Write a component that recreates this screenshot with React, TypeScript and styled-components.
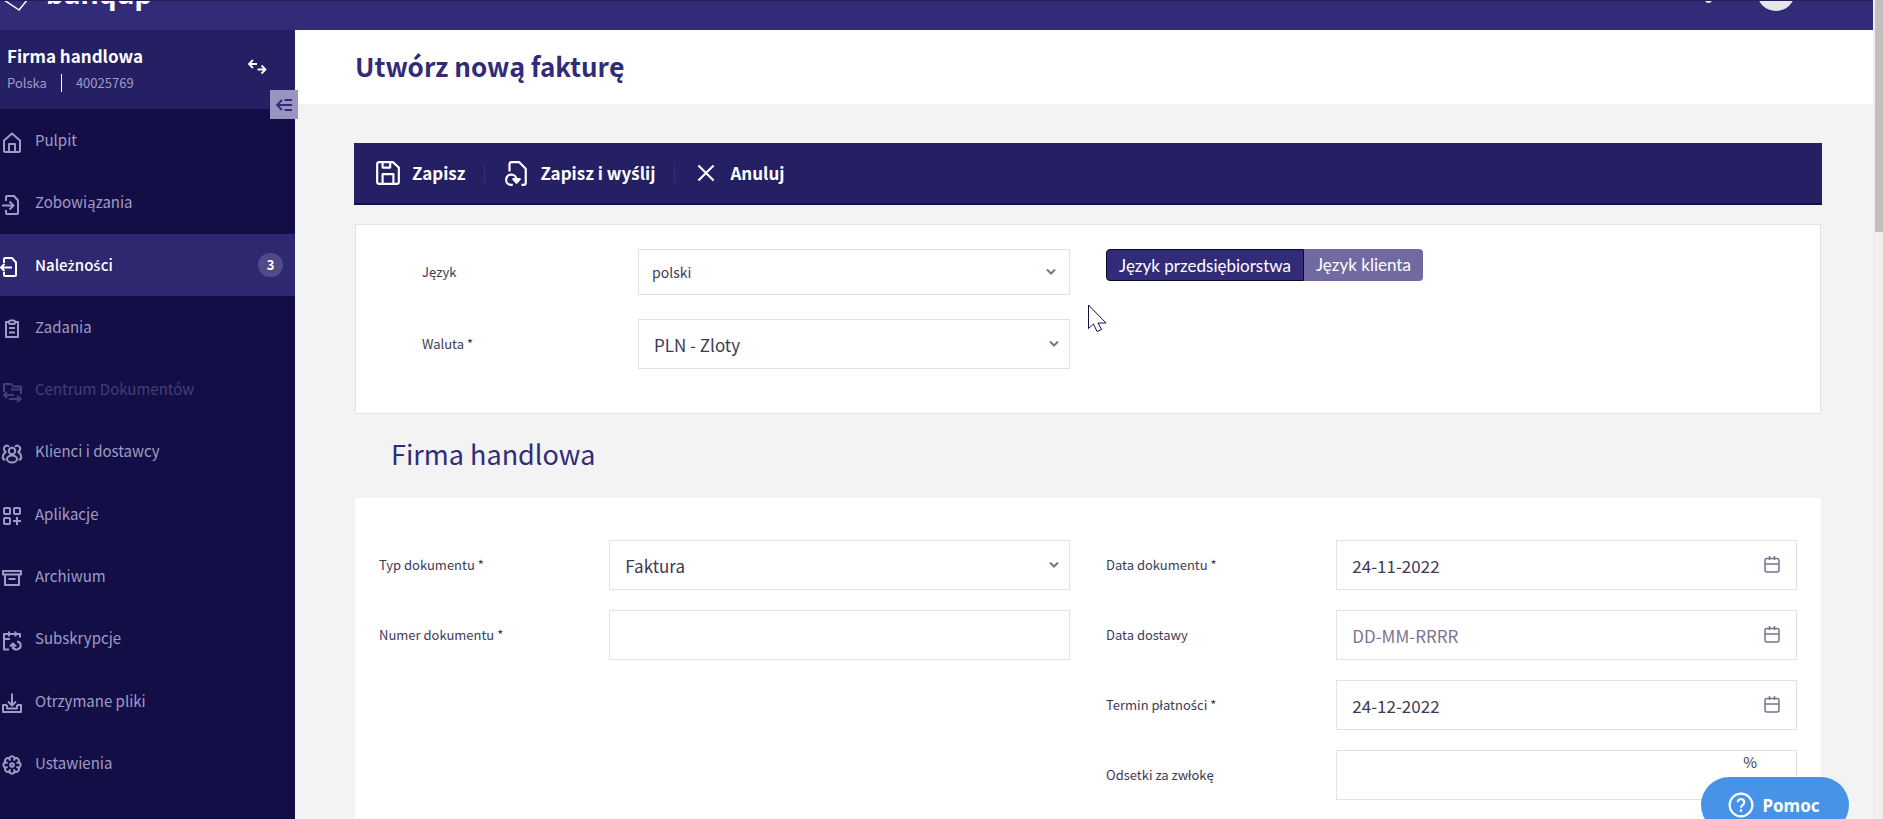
import React from 'react';
import styled, { createGlobalStyle } from 'styled-components';

const sans = `'Noto Sans CJK JP', 'Noto Sans', sans-serif`;

const GlobalStyle = createGlobalStyle`
  * { box-sizing: border-box; }
  html, body { margin: 0; }
  body { font-family: ${sans}; font-size: 14px; color: #3e3a55; background: #f3f3f3; }
  button, input, select { font-family: inherit; }
`;

const Window = styled.div`
  display: flex;
  height: 100vh;
  overflow: hidden;
`;

const Page = styled.div`
  flex: 1;
  min-width: 0;
  display: flex;
  flex-direction: column;
`;

const ScrollTrack = styled.div`
  width: 10px;
  padding-left: 2px;
  background: #efefef;
`;

const ScrollThumb = styled.div`
  height: 232px;
  background: #c0c0c0;
`;

const Header = styled.header`
  flex: none;
  height: 30px;
  display: flex;
  justify-content: space-between;
  align-items: flex-end;
  overflow: hidden;
  background: #322b78;
  border-top: 1px solid #272058;
`;

const Brand = styled.a`
  display: flex;
  align-items: flex-end;
  gap: 16px;
  padding-bottom: 19px;
  color: #fff;
  font-family: 'Noto Sans', sans-serif;
  font-size: 28px;
  font-weight: 700;
  line-height: 36px;
  text-decoration: none;
`;

const HeaderTools = styled.div`
  display: flex;
  align-items: flex-end;
  gap: 45px;
  padding: 0 78px 19px 0;
`;

const Avatar = styled.span`
  width: 38px;
  height: 38px;
  border-radius: 50%;
  background: #e6e4ec;
`;

const Dot = styled.span`
  width: 7px;
  height: 7px;
  margin-bottom: 8px;
  border-radius: 50%;
  background: #e6e4ec;
`;

const Body = styled.div`
  flex: 1;
  min-height: 0;
  display: flex;
`;

const Sidebar = styled.aside`
  flex: none;
  position: relative;
  width: 295px;
  display: flex;
  flex-direction: column;
  background: #130f46;
`;

const Company = styled.div`
  flex: none;
  height: 79px;
  display: flex;
  justify-content: space-between;
  align-items: center;
  padding: 0 28px 2px 7px;
  background: #251f64;
`;

const CompanyName = styled.div`
  color: #fff;
  font-size: 17px;
  font-weight: 700;
  line-height: 28px;
`;

const CompanyMeta = styled.div`
  display: flex;
  align-items: center;
  gap: 14px;
  color: #a09bc4;
  font-size: 13px;
  line-height: 26px;
`;

const MetaRule = styled.span`
  width: 1px;
  height: 18px;
  background: #fff;
`;

const IconButton = styled.button`
  display: flex;
  align-items: center;
  justify-content: center;
  padding: 0;
  border: 0;
  background: none;
  color: #fff;
`;

const CollapseButton = styled(IconButton)`
  position: absolute;
  z-index: 1;
  top: 60px;
  right: -3px;
  width: 28px;
  height: 29px;
  background: #9a94c0;
  color: #322b78;
`;

const Nav = styled.nav`
  flex: 1;
  display: flex;
  flex-direction: column;
  padding-bottom: 25px;
`;

const NavItem = styled.a<{ $active?: boolean; $muted?: boolean }>`
  flex: 1;
  display: flex;
  align-items: center;
  gap: 11px;
  padding-right: 12px;
  color: ${(p) => (p.$active ? '#fff' : p.$muted ? '#443d78' : '#a09bc4')};
  background: ${(p) => (p.$active ? '#2e2870' : 'transparent')};
  font-size: 15px;
  font-weight: ${(p) => (p.$active ? 500 : 400)};
  line-height: 24px;
  text-decoration: none;
  svg { flex: none; margin-top: 5px; }
`;

const NavText = styled.span`
  flex: 1;
`;

const Badge = styled.span`
  width: 25px;
  height: 24px;
  border-radius: 12px;
  background: #514a88;
  font-size: 13px;
  font-weight: 700;
  text-align: center;
`;

const Main = styled.main`
  flex: 1;
  min-width: 0;
  overflow: hidden;
`;

const TitleBar = styled.div`
  height: 74px;
  display: flex;
  align-items: center;
  padding: 0 60px 2px;
  background: #fff;
`;

const Title = styled.h1`
  margin: 0;
  color: #322b78;
  font-size: 26px;
  font-weight: 700;
  line-height: 40px;
`;

const Content = styled.div`
  padding: 39px 51px 0 59px;
`;

const Toolbar = styled.div`
  height: 62px;
  display: flex;
  align-items: center;
  padding: 0 21px;
  background: #251f64;
  border-bottom: 2px solid #130f46;
`;

const ToolButton = styled.button`
  display: flex;
  align-items: center;
  gap: 11px;
  padding: 0 19px 0 0;
  border: 0;
  background: none;
  color: #fff;
  font-size: 17px;
  font-weight: 700;
  line-height: 28px;
  & + & {
    padding-left: 19px;
    background: linear-gradient(#352e7c, #352e7c) left center / 1px 19px no-repeat;
  }
`;

const Card = styled.section<{ $outlined?: boolean }>`
  margin: 0 1px;
  padding: ${(p) => (p.$outlined ? '24px 23px 44px' : '42px 24px 40px')};
  display: grid;
  grid-template-columns: 1fr 1fr;
  column-gap: 36px;
  background: #fff;
  border: ${(p) => (p.$outlined ? '1px solid #e4e4e4' : '0')};
`;

const Settings = styled.div`
  margin-top: 19px;
`;

const Column = styled.div<{ $inset?: boolean; $gap: number }>`
  display: flex;
  flex-direction: column;
  gap: ${(p) => p.$gap}px;
  padding-left: ${(p) => (p.$inset ? 43 : 0)}px;
`;

const Field = styled.div`
  display: grid;
  grid-template-columns: 1fr 2fr;
  align-items: center;
`;

const Label = styled.label`
  font-size: 13px;
  line-height: 20px;
`;

const ControlWrap = styled.div`
  position: relative;
`;

const Trailing = styled.span<{ $right: number }>`
  position: absolute;
  right: ${(p) => p.$right}px;
  top: 0;
  bottom: 0;
  display: flex;
  align-items: center;
  color: #7d6f8c;
  pointer-events: none;
`;

const Percent = styled.span`
  position: absolute;
  top: 0;
  right: 40px;
  font-size: 15px;
  line-height: 24px;
`;

const Select = styled.select<{ $compact?: boolean }>`
  display: block;
  width: 100%;
  height: ${(p) => (p.$compact ? 46 : 50)}px;
  padding: ${(p) => (p.$compact ? '0 13px' : '0 15px')};
  appearance: none;
  border: 1px solid #e2e2e2;
  border-radius: 0;
  background: #fff;
  color: #3e3a55;
  font-size: ${(p) => (p.$compact ? 14 : 17)}px;
`;

const Input = styled.input`
  display: block;
  width: 100%;
  height: 50px;
  padding: 0 15px;
  border: 1px solid #e2e2e2;
  border-radius: 0;
  background: #fff;
  color: #3e3a55;
  font-size: 17px;
  &::placeholder { color: #7d7590; opacity: 1; }
`;

const Segmented = styled.div`
  display: flex;
  height: 32px;
`;

const Segment = styled.button<{ $on?: boolean }>`
  padding: ${(p) => (p.$on ? '2px 12px 0' : '0 12px')};
  border: ${(p) => (p.$on ? '1px solid #0b0830' : '0')};
  border-radius: ${(p) => (p.$on ? '4px 0 0 4px' : '0 4px 4px 0')};
  background: ${(p) => (p.$on ? '#322b78' : '#706aa0')};
  color: #fff;
  font-family: Lato, sans-serif;
  font-size: 17px;
  line-height: 24px;
`;

const SectionTitle = styled.h2`
  margin: 0;
  padding: 20px 37px 24px;
  color: #322b78;
  font-size: 27px;
  font-weight: 400;
  line-height: 40px;
`;

const HelpButton = styled.button`
  position: fixed;
  z-index: 2;
  right: 34px;
  bottom: -14px;
  width: 148px;
  height: 56px;
  display: flex;
  align-items: center;
  justify-content: center;
  gap: 8px;
  padding: 0 8px 0 6px;
  border: 0;
  border-radius: 28px;
  background: #4793e8;
  color: #fff;
  font-family: 'Noto Sans', sans-serif;
  font-size: 17px;
  font-weight: 700;
`;

const Pointer = styled.svg`
  position: absolute;
  z-index: 3;
  left: 1088px;
  top: 304px;
`;

const Accented = styled.span`
  font-family: 'Noto Sans', sans-serif;
`;

/* The main family has no ś, ż or ć, so those letters come from the second one. */
const polish = (text: string) =>
  text.split(/([śżć])/).map((part, i) => (i % 2 ? <Accented key={i}>{part}</Accented> : part));

type GlyphProps = { size?: number; width?: number; children: React.ReactNode };
const Glyph = ({ size = 24, width = 2, children }: GlyphProps) => (
  <svg width={size} height={size} viewBox="0 0 24 24" fill="none" stroke="currentColor"
    strokeWidth={width} strokeLinejoin="round" aria-hidden="true">{children}</svg>
);

/* Eight rounded petals and eight spokes of the settings wheel. */
const polar = (r: number, deg: number) => {
  const a = (deg * Math.PI) / 180;
  return `${(12 + r * Math.cos(a)).toFixed(2)} ${(12 + r * Math.sin(a)).toFixed(2)}`;
};
const turns = Array.from({ length: 8 }, (_, i) => i * 45);
const petals = `M${polar(7.3, -22.5)}` + turns.map((t) => `A3 3 0 0 1 ${polar(7.3, t + 22.5)}`).join('');
const spokes = turns.map((t) => `M${polar(4.8, t + 22.5)}L${polar(7.3, t + 22.5)}`).join('');

const nav: { text: string; icon: React.ReactNode; active?: boolean; muted?: boolean; count?: number }[] = [
  { text: 'Pulpit', icon: <path d="M4 9.500 12 2.500l8 7V20a1 1 0 0 1-1 1H5a1 1 0 0 1-1-1zM9 21v-8h6v8" /> },
  { text: 'Zobowiązania', icon: <path d="M6 8V4a1 1 0 0 1 1-1h7l4 4.500V20a1 1 0 0 1-1 1H7a1 1 0 0 1-1-1v-3M2 12.500h11M9.500 8.500l4 4-4 4" /> },
  { text: 'Należności', active: true, count: 3, icon: <path d="M4 8V4a1 1 0 0 1 1-1h7l4 4.500V20a1 1 0 0 1-1 1H5a1 1 0 0 1-1-1v-3M12 12.500H1M4.500 9l-3.500 3.500 3.500 3.500" /> },
  { text: 'Zadania', icon: <><path d="M8.500 5H6v15h12V5h-2.500" /><rect x="9" y="3.500" width="6" height="3.500" rx="1.500" /><path d="M9 11h6M9 15.500h6" /></> },
  { text: 'Centrum Dokumentów', muted: true, icon: <path d="M4 12V4h7l2 2.500h8V14M11 9.500h10M7 12l-3 3 3 3M4 15h10M17 16l4 3-4 3M9 19h12" /> },
  { text: 'Klienci i dostawcy', icon: <><circle cx="12" cy="9" r="3.200" /><ellipse cx="12" cy="17" rx="5" ry="3.500" /><path d="M9 4.800a2.900 2.900 0 0 0-4.500 3.700c.3.700.8 1.200 1.300 1.500C3 11.500 2 15 3.500 17.500h2M15 4.800a2.900 2.900 0 0 1 4.500 3.700c-.3.700-.8 1.200-1.300 1.500C21 11.500 22 15 20.500 17.500h-2" /></> },
  { text: 'Aplikacje', icon: <><rect x="4" y="4" width="6" height="6" rx="1" /><rect x="14" y="4" width="6" height="6" rx="1" /><rect x="4" y="14" width="6" height="6" rx="1" /><path d="M17 13v8M13 17h8" /></> },
  { text: 'Archiwum', icon: <path d="M3 5h18v3.500H3zM5 8.500V19h14V8.500M8.500 13h7" /> },
  { text: 'Subskrypcje', icon: <path d="M9 2.500v5M15.500 2.500v5M20 8.500V5H4v15.500h5M4 10h6M17 12.500a4 4 0 1 1-4 5.500M13 20v-4.500M10 17.500l3-3 3 3" /> },
  { text: 'Otrzymane pliki', icon: <path d="M12 2.500V14M8 10.500l4 4 4-4M7 14H3v7h18v-7h-4M7 14v3.500h10V14" /> },
  { text: 'Ustawienia', icon: <><path d={petals} /><path d={spokes} /><circle cx="12" cy="12" r="1.800" /></> },
];

const Chevron = () => (
  <svg width="10" height="6" viewBox="0 0 10 6" fill="none" stroke="currentColor" strokeWidth="2" aria-hidden="true"><path d="m1 .5 4 4 4-4" /></svg>
);

const CalendarIcon = () => (
  <svg width="16" height="18" viewBox="0 0 16 18" fill="none" stroke="currentColor" strokeWidth="1.500" aria-hidden="true">
    <rect x="1" y="2.500" width="14" height="13.500" rx="2" /><path d="M1 8h14M5.500 0v4M10.500 0v4" />
  </svg>
);

type ItemProps = { id: string; label: string; value?: string; compact?: boolean; placeholder?: string };

const SelectField = ({ id, label, value, compact }: ItemProps) => (
  <Field>
    <Label htmlFor={id}>{label}</Label>
    <ControlWrap>
      <Select id={id} $compact={compact}><option>{value}</option></Select>
      <Trailing $right={compact ? 14 : 11}><Chevron /></Trailing>
    </ControlWrap>
  </Field>
);

const DateField = ({ id, label, value, placeholder }: ItemProps) => (
  <Field>
    <Label htmlFor={id}>{polish(label)}</Label>
    <ControlWrap>
      <Input id={id} type="text" defaultValue={value} placeholder={placeholder} />
      <Trailing $right={17}><CalendarIcon /></Trailing>
    </ControlWrap>
  </Field>
);

export default function App() {
  return (
    <Window>
      <GlobalStyle />
      <Page>
        <Header>
          <Brand href="#">
            <svg width="30" height="38" viewBox="0 0 30 38" fill="none" stroke="currentColor" strokeWidth="1.500" aria-hidden="true"><path d="M19 37 4 27 1 12 12 2l16 6v18z" /></svg>
            banqup
          </Brand>
          <HeaderTools><Dot /><Avatar /></HeaderTools>
        </Header>
        <Body>
          <Sidebar>
            <Company>
              <div>
                <CompanyName>Firma handlowa</CompanyName>
                <CompanyMeta>Polska<MetaRule />40025769</CompanyMeta>
              </div>
              <IconButton type="button" aria-label="Zmień firmę">
                <svg width="20" height="20" viewBox="0 0 20 20" fill="none" stroke="currentColor" strokeWidth="1.800"><path d="M10 5H2.500M6 1 2 5l4 4M10.500 10.500H18M14.500 6.500l4 4-4 4" /></svg>
              </IconButton>
            </Company>
            <CollapseButton type="button" aria-label="Zwiń menu">
              <svg width="18" height="14" viewBox="0 0 18 14" fill="none" stroke="currentColor" strokeWidth="1.800"><path d="M17 7H2M7 2 2 7l5 5M9.500 2H17M9.500 12H17" /></svg>
            </CollapseButton>
            <Nav>
              {nav.map((n) => (
                <NavItem key={n.text} href="#" $active={n.active} $muted={n.muted}>
                  <Glyph>{n.icon}</Glyph>
                  <NavText>{polish(n.text)}</NavText>
                  {n.count && <Badge>{n.count}</Badge>}
                </NavItem>
              ))}
            </Nav>
          </Sidebar>
          <Main>
            <TitleBar><Title>Utwórz nową fakturę</Title></TitleBar>
            <Content>
              <Toolbar>
                <ToolButton type="button">
                  <Glyph size={26}><path d="M4 2h12.500L22 7v13a2 2 0 0 1-2 2H4a2 2 0 0 1-2-2V4a2 2 0 0 1 2-2zM7 2v5h7V2M7 22v-9h10v9" /></Glyph>
                  Zapisz
                </ToolButton>
                <ToolButton type="button">
                  <Glyph size={26}><path d="M6 10.500V4a2 2 0 0 1 2-2h7l6 6v13a2 2 0 0 1-2 2h-2M9 23H7a4.800 4.800 0 1 1 5.500-5" /><path d="M9.500 17.500h6l-3 3.500z" fill="currentColor" /></Glyph>
                  <span>{polish('Zapisz i wyślij')}</span>
                </ToolButton>
                <ToolButton type="button">
                  <Glyph size={26}><path d="m5 5 14 14M19 5 5 19" /></Glyph>
                  Anuluj
                </ToolButton>
              </Toolbar>
              <Settings>
                <Card $outlined>
                  <Column $inset $gap={24}>
                    <SelectField id="language" label="Język" value="polski" compact />
                    <SelectField id="currency" label="Waluta *" value="PLN - Zloty" />
                  </Column>
                  <Segmented>
                    <Segment type="button" $on>Język przedsiębiorstwa</Segment>
                    <Segment type="button">Język klienta</Segment>
                  </Segmented>
                </Card>
              </Settings>
              <SectionTitle>Firma handlowa</SectionTitle>
              <Card>
                <Column $gap={20}>
                  <SelectField id="doc-type" label="Typ dokumentu *" value="Faktura" />
                  <Field>
                    <Label htmlFor="doc-number">Numer dokumentu *</Label>
                    <Input id="doc-number" type="text" />
                  </Field>
                </Column>
                <Column $gap={20}>
                  <DateField id="doc-date" label="Data dokumentu *" value="24-11-2022" />
                  <DateField id="delivery-date" label="Data dostawy" placeholder="DD-MM-RRRR" />
                  <DateField id="due-date" label="Termin płatności *" value="24-12-2022" />
                  <Field>
                    <Label htmlFor="interest">Odsetki za zwłokę</Label>
                    <ControlWrap>
                      <Input id="interest" type="text" />
                      <Percent>%</Percent>
                    </ControlWrap>
                  </Field>
                </Column>
              </Card>
            </Content>
          </Main>
        </Body>
      </Page>
      <ScrollTrack><ScrollThumb /></ScrollTrack>
      <HelpButton type="button">
        <Glyph size={26}><circle cx="12" cy="12" r="10.500" /><path d="M9 9.500a3 3 0 1 1 4.500 2.600c-1 .6-1.500 1-1.500 2.400M12 16v2.200" /></Glyph>
        Pomoc
      </HelpButton>
      <Pointer width="20" height="30" viewBox="0 0 20 30" fill="#fff" stroke="#130f46"><path d="M.5 1v23.500l5-4.500 3.500 7.500 4.500-2-3.500-6.500h8z" /></Pointer>
    </Window>
  );
}
